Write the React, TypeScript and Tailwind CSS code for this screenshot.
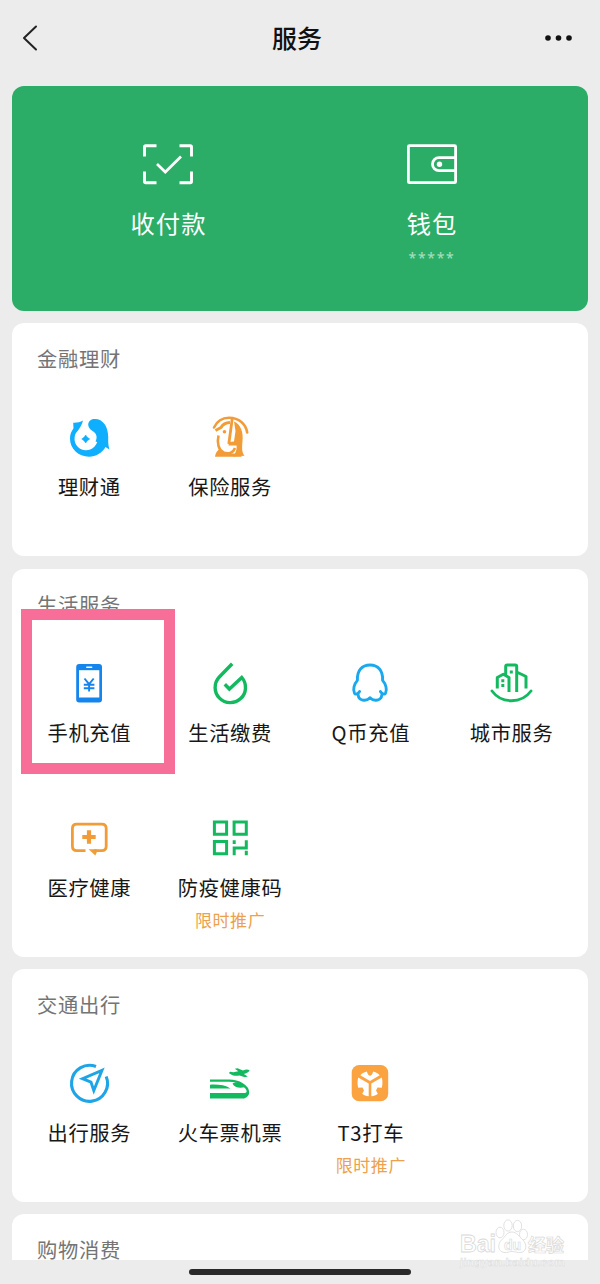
import type { ReactNode } from 'react';

const BLUE = '#10aeff';
const GREEN = '#13b95f';
const ORANGE = '#f29c38';

function Icon({ children }: { children: ReactNode }) {
  return (
    <svg viewBox="0 0 48 48" className="block size-12 shrink-0" fill="none">
      {children}
    </svg>
  );
}

const WealthIcon = () => (
  <Icon>
    <path
      fill={BLUE}
      d="M8.200 9.800C12 10 15 9.300 18 7.600C17.200 11 15.500 14.500 13 17.400A11.600 11.600 0 1 0 32.200 29L30.500 28.500C32.300 25 32 21.500 29 19C26 16.800 23.500 15.500 23.200 11.500C23.500 8 26 6 30 6C38 6 43 13.500 43.200 23.500C43.200 28.500 43 31.500 44.400 36.600L40.500 34C37 40 31 43.700 24 43.700C13.500 43.700 5 36 5 25.500C5 21.500 6.300 18.500 8.500 15.300Z"
    />
    <path fill={BLUE} d="M20.700 22Q22 24.700 24.700 26Q22 27.300 20.700 30Q19.400 27.300 16.700 26Q19.400 24.700 20.700 22Z" stroke={BLUE} strokeWidth="0.500" />
  </Icon>
);

const InsuranceIcon = () => (
  <Icon>
    <path stroke={ORANGE} strokeWidth="2.600" strokeLinecap="round" d="M8 14.500C11 8 16.500 4.700 23 4.700C33 4.700 40 11 41.200 19.500" />
    <path stroke={ORANGE} strokeWidth="3" d="M9.500 17.500L15 14.500C17 11 20 9.700 24 9.500" />
    <path fill={ORANGE} d="M28 8.500C35 11 37.500 20 36.500 28C36 34 35.500 39 38.500 42.800L27 43.500C30 40 31 35 30.500 32.500H22.500L23 29L28 28.500L29.500 18Z" />
    <path stroke={ORANGE} strokeWidth="2.800" d="M26.200 6L22.800 31" />
    <path stroke={ORANGE} strokeWidth="2.600" d="M12.500 22.500C10.800 30 12.500 37 17.500 39.500C23 41.500 27.500 39.500 29 35" />
    <path fill={ORANGE} d="M9 43.700C9.500 40 11 38 13 36.500L20 40.500H32L36 43.700Z" />
    <circle cx="18.500" cy="18.700" r="1.800" fill={ORANGE} />
  </Icon>
);

const PhoneIcon = () => (
  <Icon>
    <rect x="11.200" y="5" width="25.800" height="38.600" rx="3" fill="#1485ee" />
    <path fill="#fff" d="M14 11.200H34.300V38.500H14Z" />
    <path stroke="#fff" strokeWidth="1.500" strokeLinecap="round" d="M21.800 8.200H26.600" />
    <path stroke="#1485ee" strokeWidth="1.900" d="M19.500 19.500L24.100 25.200L28.700 19.500M24.100 25V32.500M18.800 25.700H29.400M18.800 29.200H29.400" />
  </Icon>
);

const UtilitiesIcon = () => (
  <Icon>
    <path
      stroke={GREEN}
      strokeWidth="3.400"
      d="M26.200 4.800L13.300 18A15.200 15.200 0 1 0 35.800 18.500L23.400 30L18.800 25.200"
    />
  </Icon>
);

const QqIcon = () => (
  <Icon>
    <path
      stroke="#1aa9ee"
      strokeWidth="2.900"
      strokeLinecap="round"
      strokeLinejoin="round"
      d="M13.600 32.400C12 35 9.500 36 8.500 34.200C6.600 30.500 8.200 25 11.400 21.400C10.800 11.500 16 6 24 6C32 6 37.200 11.500 36.600 21.400C39.800 25 41.400 30.500 39.500 34.200C38.500 36 36 35 34.400 32.400M11.300 34.900C13.200 35.800 11.700 37.300 13.200 39C15.500 42.200 21.500 41.800 24 38.700C26.500 41.800 32.500 42.200 34.800 39C36.300 37.300 34.800 35.800 36.700 34.900"
    />
  </Icon>
);

const CityIcon = () => (
  <Icon>
    <path
      stroke={GREEN}
      strokeWidth="3"
      strokeLinejoin="round"
      d="M10.300 29.500V18.500L16.300 15.300L22 18.500V33M18.700 15.500V7.500Q18.700 6 20.200 6H28.200Q29.700 6 29.700 7.500V33M29.700 13L39 17.500V29.500"
    />
    <path stroke={GREEN} strokeWidth="2.800" strokeLinecap="round" d="M5 32C14.500 45 34.500 45 44 32" />
    <path fill={GREEN} d="M22.800 11.400h3v3h-3zM14.300 20.200h3v3h-3zM14.300 25h3v3h-3z" />
  </Icon>
);

const MedicalIcon = () => (
  <Icon>
    <path
      stroke={ORANGE}
      strokeWidth="2.800"
      d="M20.500 36.600H11.800Q7.400 36.600 7.400 32.200V14.600Q7.400 10.200 11.800 10.200H36.800Q41.200 10.200 41.200 14.600V32.200Q41.200 36.600 36.800 36.600H29"
    />
    <path fill={ORANGE} d="M23.600 35.300H32V37.800L30.300 41.500Z" />
    <path stroke={ORANGE} strokeWidth="4.200" d="M17.300 23H30.700M24 16.300V29.700" />
  </Icon>
);

const QrIcon = () => (
  <Icon>
    <path stroke={GREEN} strokeWidth="3" d="M8.400 8H20.600V20.300H8.400ZM28.100 8H40.300V20.300H28.100ZM8.400 27.600H20.600V39.800H8.400Z" />
    <path stroke={GREEN} strokeWidth="3" d="M28.200 26.200V30M28.200 41.200V33.900H40.300V26.200M40.300 36.800V41.200" />
  </Icon>
);

const TravelIcon = () => (
  <Icon>
    <path stroke="#1ea5e8" strokeWidth="3.100" d="M31 7.500A18 18 0 1 0 41.200 17.500" />
    <path stroke="#1ea5e8" strokeWidth="2.900" d="M37 11.300L17.500 19.700L26 23.200L28.800 31.500Z" />
  </Icon>
);

const TrainIcon = () => (
  <Icon>
    <path stroke={GREEN} strokeWidth="2.300" d="M4 21.700H23C33 21.700 42 27 42 33.500C42 36 40 37.500 37.500 38.300" />
    <path fill={GREEN} d="M4 25.700C12 25.300 19 26 24.500 29.500H4ZM4 34H38.500C40.500 34 41.500 32.500 41 31C43.500 35 41.500 37 38.300 37V39.500H4ZM26.500 24.800C30 22 34.500 23 39 28.300C33 29.500 28.500 28.500 26.500 24.800Z" />
    <path fill={GREEN} d="M22.800 14L24.200 12.700L27.500 13.300L32.300 12.300L28.800 9.800L31.500 9.300L37 11.400C40 10.300 42 10.200 43.700 11.500C42.500 13.500 40 14.500 37.800 15.100L41.800 17.600L39 18.200L33.500 16.400C30 17.200 26.500 17 22.800 14Z" />
  </Icon>
);

const TaxiIcon = () => (
  <Icon>
    <rect x="5.700" y="6" width="36.500" height="36.200" rx="7.500" fill="#fba341" />
    <g fill="#fff">
      <path d="M24 22L14.300 16.200C15.800 14.600 17.800 13.300 20.800 12.500L22 15.500L24 17L26 15.500L27.200 12.500C30.200 13.300 32.200 14.600 33.700 16.200Z" />
      <path d="M22.700 24.500V37.300C20 37 17.800 36.200 16.200 34.800L18 31.500L16.500 28.500L12.200 28.700C11.200 25 11.400 22 12.200 18.500Z" />
      <path d="M25.300 24.500V37.300C28 37 30.200 36.200 31.800 34.800L30 31.500L31.500 28.500L35.800 28.700C36.800 25 36.600 22 35.800 18.500Z" />
    </g>
  </Icon>
);

type Service = { label: string; icon: ReactNode; promo?: boolean; marked?: boolean };

const finance: Service[] = [
  { label: '理财通', icon: <WealthIcon /> },
  { label: '保险服务', icon: <InsuranceIcon /> },
];

const life: Service[] = [
  { label: '手机充值', icon: <PhoneIcon />, marked: true },
  { label: '生活缴费', icon: <UtilitiesIcon /> },
  { label: 'Q币充值', icon: <QqIcon /> },
  { label: '城市服务', icon: <CityIcon /> },
  { label: '医疗健康', icon: <MedicalIcon /> },
  { label: '防疫健康码', icon: <QrIcon />, promo: true },
];

const transport: Service[] = [
  { label: '出行服务', icon: <TravelIcon /> },
  { label: '火车票机票', icon: <TrainIcon /> },
  { label: 'T3打车', icon: <TaxiIcon />, promo: true },
];

function ServiceItem({ label, icon, promo, marked }: Service) {
  return (
    <div className="relative flex h-[155px] flex-col items-center pt-[12px]">
      {icon}
      <span className="mt-[10px] whitespace-nowrap pl-px text-[20.300px] leading-[30px] tracking-[0.7px] text-[#171717]">{label}</span>
      {promo && <span className="mt-[6px] pl-px text-[17px] leading-6 tracking-[0.6px] text-[#eda14c]">限时推广</span>}
      {marked && <div className="absolute -top-[38px] left-[2px] h-[165px] w-[154px] border-[11px] border-[#f76f98]" />}
    </div>
  );
}

function Section({ title, items }: { title: string; items: Service[] }) {
  return (
    <section className="shrink-0 rounded-xl bg-white px-[6.500px]">
      <h2 className="h-[78px] pl-[18.500px] pt-[25px] text-[20.300px] leading-5 tracking-[0.7px] text-[#747474]">{title}</h2>
      <div className="grid grid-cols-4">
        {items.map((item) => (
          <ServiceItem key={item.label} {...item} />
        ))}
      </div>
    </section>
  );
}

function Watermark() {
  return (
    <svg viewBox="0 0 112 56" className="absolute left-[458px] top-[1216px] h-14 w-28 font-['Liberation_Sans','Noto_Sans_CJK_SC',sans-serif] font-bold" fill="#fff" stroke="#d9d9d9" strokeWidth="0.800">
      <text x="2" y="36" fontSize="24" textLength="36" lengthAdjust="spacingAndGlyphs">Bai</text>
      <ellipse cx="42" cy="16.500" rx="4" ry="5.300" />
      <ellipse cx="50" cy="9.500" rx="4.200" ry="5.600" />
      <ellipse cx="59.500" cy="10" rx="4.200" ry="5.600" />
      <ellipse cx="65.500" cy="18.500" rx="4" ry="5.300" />
      <path d="M54 16C48.500 16 47 21 43.500 24C39.500 28 39.500 35.500 46 36.500C50 37 50 35.500 54 35.500C58 35.500 59.500 37 63 36.500C69 35.500 69 28 65 24C61.500 21 59 16 54 16Z" />
      <text x="46" y="33.500" fontSize="14" strokeWidth="0.600">du</text>
      <text x="70" y="35.500" fontSize="18" strokeWidth="0.700">经验</text>
      <text x="2" y="50" fontSize="11.500" textLength="105" fill="#f6f6f6" strokeWidth="0.400">jingyan.baidu.com</text>
    </svg>
  );
}

export default function App() {
  return (
    <div className="relative flex h-[1284px] w-[600px] flex-col overflow-hidden bg-[#ececec] font-['Noto_Sans_CJK_SC',sans-serif]">
      <header className="flex h-[86px] shrink-0 items-start justify-between pl-[21px] pr-[26px] pt-[22px]">
        <svg viewBox="0 0 18 32" className="h-8 w-[18px]" fill="none" stroke="#222" strokeWidth="2" strokeLinecap="round" strokeLinejoin="round">
          <path d="M15 4.500L3 16L15 27.500" />
        </svg>
        <h1 className="-mt-px ml-[11px] text-[25px] font-medium leading-8 text-[#111]">服务</h1>
        <svg viewBox="0 0 30 32" className="h-8 w-[30px]" fill="#111">
          <circle cx="4" cy="16" r="2.800" />
          <circle cx="14.500" cy="16" r="2.800" />
          <circle cx="25" cy="16" r="2.800" />
        </svg>
      </header>

      <main className="flex h-[1174px] shrink-0 flex-col gap-[12.300px] overflow-hidden px-3">
        <section className="grid h-[225px] shrink-0 grid-cols-2 rounded-xl bg-[#2bad67] px-6 pt-[54px] text-white">
          <div className="flex flex-col items-center">
            <svg viewBox="0 0 54 48" className="h-12 w-[54px]" fill="none" stroke="#fff" strokeWidth="2.900">
              <path d="M15.500 5.700H4.700Q3.500 5.700 3.500 6.900V16.500M38.500 5.700H49.300Q50.500 5.700 50.500 6.900V16.500M15.500 42.700H4.700Q3.500 42.700 3.500 41.500V31.500M38.500 42.700H49.300Q50.500 42.700 50.500 41.500V31.500" />
              <path d="M16 24L24.300 32L40 16.500" strokeWidth="2.700" />
            </svg>
            <span className="mt-[17px] pl-px text-[24.300px] leading-[36px] tracking-[1px]">收付款</span>
          </div>
          <div className="flex flex-col items-center">
            <svg viewBox="0 0 54 48" className="h-12 w-[54px]" fill="none" stroke="#fff" strokeWidth="2.800">
              <rect x="3.400" y="5.700" width="47.200" height="37" rx="1" />
              <path d="M50.500 17.700H34A6.500 6.500 0 0 0 34 30.700H50.500" />
              <circle cx="34.500" cy="24.200" r="2.700" fill="#fff" stroke="none" />
            </svg>
            <span className="mt-[17px] text-[24.300px] leading-[36px] tracking-[1px]">钱包</span>
            <span className="mt-[7px] font-['Noto_Sans'] text-[14px] font-medium leading-5 tracking-[1.700px] text-[#a3dcbc]">*****</span>
          </div>
        </section>
        <Section title="金融理财" items={finance} />
        <Section title="生活服务" items={life} />
        <Section title="交通出行" items={transport} />
        <Section title="购物消费" items={[]} />
      </main>

      <footer className="flex h-6 shrink-0 justify-center pt-[9px]">
        <div className="h-[6px] w-[222px] rounded-full bg-[#292929]" />
      </footer>
      <Watermark />
    </div>
  );
}
